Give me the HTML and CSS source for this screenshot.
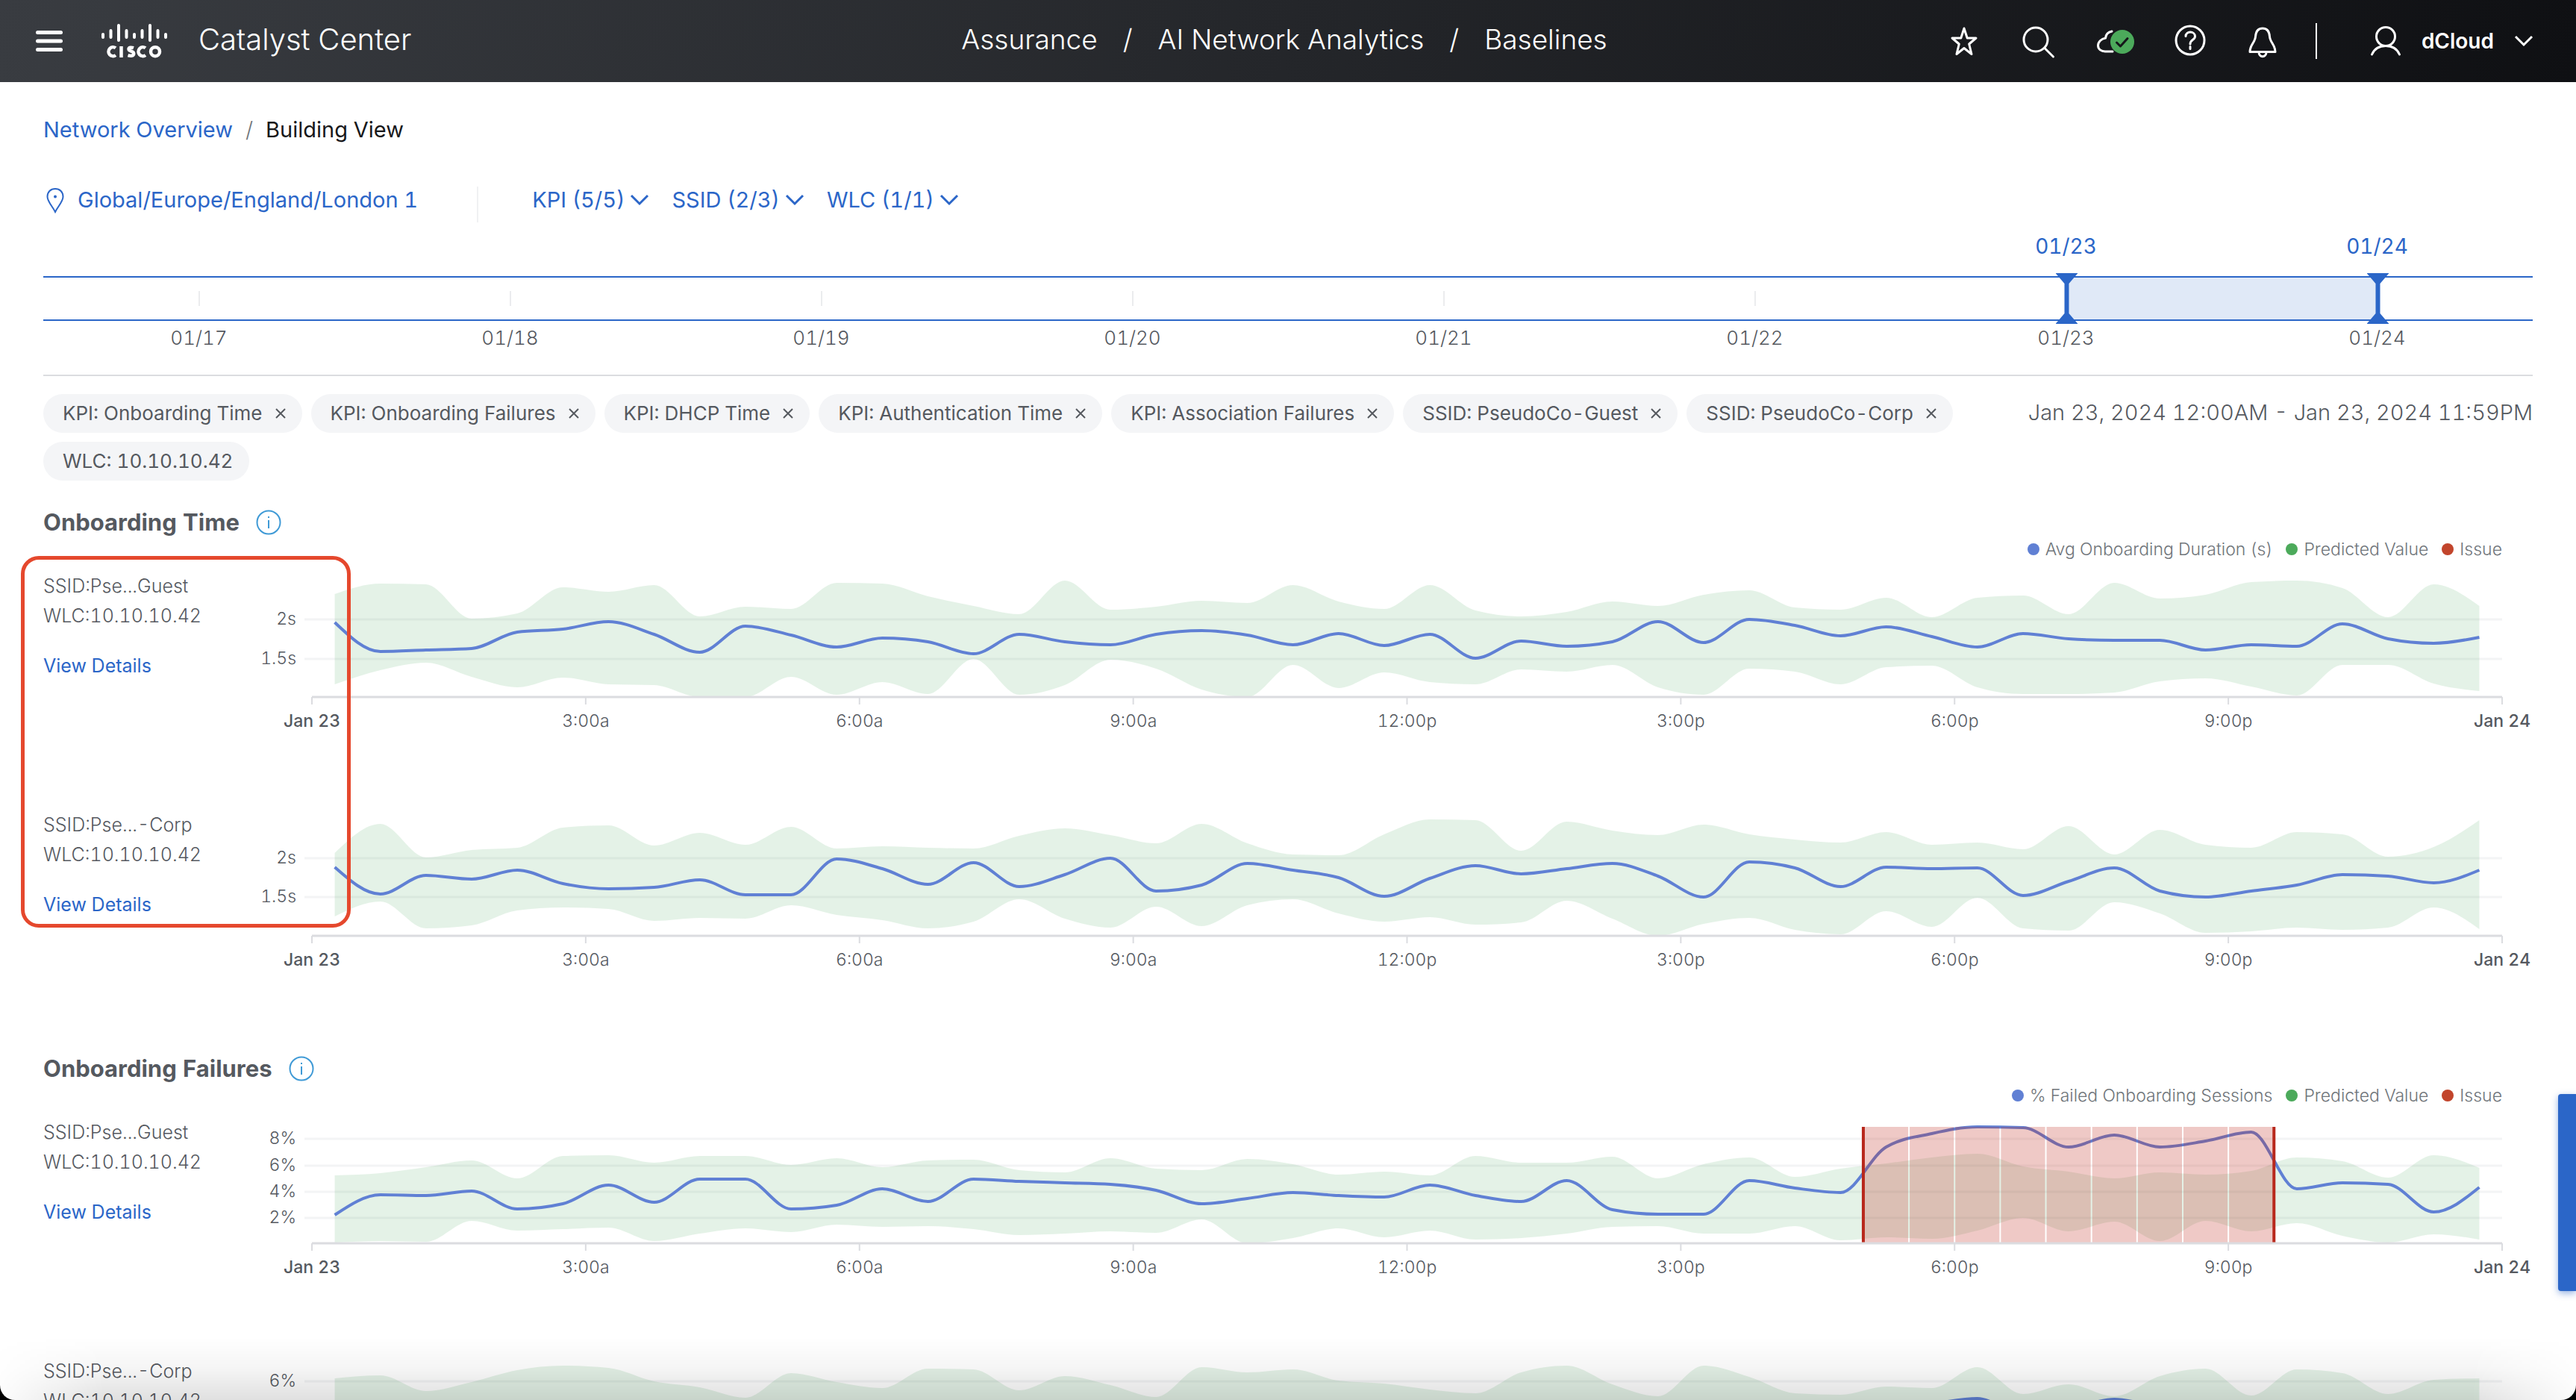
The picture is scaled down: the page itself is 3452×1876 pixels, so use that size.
FILE: index.html
```
<!DOCTYPE html>
<html lang="en">
<head>
<meta charset="utf-8">
<title>Catalyst Center - Baselines</title>
<link rel="stylesheet" href="styles.css">
</head>
<body>
<header class="topbar">
  <div class="brand">
    <button class="icon-btn" aria-label="Menu"><svg width="36" height="30" viewBox="0 0 36 30" stroke="#fff" stroke-width="5" stroke-linecap="round"><path d="M2.500 3.500h31M2.500 15h31M2.500 26.500h31"/></svg></button>
    <svg class="logo" width="88" height="46" viewBox="0 0 88 46" role="img" aria-label="Cisco" fill="none" stroke="#fff" stroke-width="4" stroke-linecap="round">
      <path d="M2 14v4M12.500 9v9M23 2v20M33.500 9v9M44 14v4M54.500 9v9M65 2v20M75.500 9v9M86 14v4"/>
      <path stroke-width="4.500" stroke-linecap="butt" d="M19 32.300a6 6 0 1 0 0 9.700M26.500 30v15M43 32.200c-3-1-6.500-.7-6.500 1.600 0 3.700 6.700 2 6.700 5.900 0 3.400-4 3.600-7.700 2.400M59 32.300a6 6 0 1 0 0 9.700"/><circle cx="72" cy="37.200" r="6" stroke-width="4.500"/>
    </svg>
    <span class="product">Catalyst Center</span>
  </div>
  <nav class="trail" aria-label="Section"><a href="#">Assurance</a><span>/</span><a href="#">AI Network Analytics</a><span>/</span><a href="#">Baselines</a></nav>
  <div class="tools">
    <div class="tool-set">
      <button class="icon-btn" aria-label="Favorites"><svg class="ico" viewBox="0 0 44 44"><path d="M22 5l4.200 13H38l-9.300 8L32 39.500l-10-8-10 8L15.300 26 6 18h11.800z"/></svg></button>
      <button class="icon-btn" aria-label="Search"><svg class="ico" viewBox="0 0 44 44"><circle cx="18" cy="20" r="16"/><path d="M30 31.500L41.500 43"/></svg></button>
      <button class="icon-btn" aria-label="Cloud status"><svg class="ico" viewBox="0 0 44 44"><path d="M20 9c-5 1-8 4-8.500 9C6 19 1.500 23 1.500 28S6 36 11 36h10"/><circle class="ok" cx="34" cy="23" r="16"/><path stroke="#15171a" d="M26.500 24l5 5L41 18.500"/></svg></button>
      <button class="icon-btn" aria-label="Help"><svg class="ico" viewBox="0 0 44 44"><circle cx="25" cy="21" r="19"/><path d="M19 15.500c0-7.500 12.500-7 12.500.200 0 5-6.500 4.300-6.500 10.300M25 29.500v3"/></svg></button>
      <button class="icon-btn" aria-label="Notifications"><svg class="ico" viewBox="0 0 44 44"><path d="M22 5c-6 0-9 4-9.500 11C12 24 5 27 5 36.500h34C39 27 32 24 31.500 16 31 9 28 5 22 5zM17 37c0 7.500 10 7.500 10 0"/></svg></button>
    </div>
    <button class="account"><svg class="person" width="40" height="40" viewBox="0 0 40 40"><circle cx="20" cy="14" r="12.500"/><path d="M1.500 38C5 30 12 26.500 20 26.500S35 30 38.500 38"/></svg><span>dCloud</span><svg class="chev" width="24" height="14" viewBox="0 0 24 14"><path d="M1 1l11 11L23 1"/></svg></button>
  </div>
</header>

<main class="page">
  <nav class="crumbs" aria-label="Breadcrumb"><a href="#">Network Overview</a><span class="sep">/</span><span>Building View</span></nav>

  <div class="filters">
    <a class="location" href="#"><svg width="24" height="36" viewBox="0 0 24 36"><path d="M12 3C5.500 3 1.500 7.500 1.500 13.500 1.500 20 8 26 12 34c4-8 10.500-14 10.500-20.500C22.500 7.500 18.500 3 12 3z"/><circle class="dot" cx="12" cy="13.500" r="2"/></svg>Global/Europe/England/London 1</a>
    <div class="pickers">
      <button class="picker">KPI (5/5)<svg class="chev" width="24" height="14" viewBox="0 0 24 14"><path d="M1 1l11 11L23 1"/></svg></button>
      <button class="picker">SSID (2/3)<svg class="chev" width="24" height="14" viewBox="0 0 24 14"><path d="M1 1l11 11L23 1"/></svg></button>
      <button class="picker">WLC (1/1)<svg class="chev" width="24" height="14" viewBox="0 0 24 14"><path d="M1 1l11 11L23 1"/></svg></button>
    </div>
  </div>

  <section class="timeline" aria-label="Date range">
    <div class="days picked"><span class="from">01/23</span><span>01/24</span></div>
    <div class="band">
      <div class="days ticks"><i></i><i></i><i></i><i></i><i></i><i></i><i></i><i></i></div>
      <div class="range"><span class="handle start"></span><span class="handle end"></span></div>
    </div>
    <div class="days dates"><span>01/17</span><span>01/18</span><span>01/19</span><span>01/20</span><span>01/21</span><span>01/22</span><span>01/23</span><span>01/24</span></div>
  </section>

  <div class="applied">
    <ul class="chips">
      <li>KPI: Onboarding Time<button aria-label="Remove"><svg class="x" viewBox="0 0 14 14"><path d="M1 1l12 12M13 1L1 13"/></svg></button></li>
      <li>KPI: Onboarding Failures<button aria-label="Remove"><svg class="x" viewBox="0 0 14 14"><path d="M1 1l12 12M13 1L1 13"/></svg></button></li>
      <li>KPI: DHCP Time<button aria-label="Remove"><svg class="x" viewBox="0 0 14 14"><path d="M1 1l12 12M13 1L1 13"/></svg></button></li>
      <li>KPI: Authentication Time<button aria-label="Remove"><svg class="x" viewBox="0 0 14 14"><path d="M1 1l12 12M13 1L1 13"/></svg></button></li>
      <li>KPI: Association Failures<button aria-label="Remove"><svg class="x" viewBox="0 0 14 14"><path d="M1 1l12 12M13 1L1 13"/></svg></button></li>
      <li>SSID: PseudoCo-Guest<button aria-label="Remove"><svg class="x" viewBox="0 0 14 14"><path d="M1 1l12 12M13 1L1 13"/></svg></button></li>
      <li>SSID: PseudoCo-Corp<button aria-label="Remove"><svg class="x" viewBox="0 0 14 14"><path d="M1 1l12 12M13 1L1 13"/></svg></button></li>
      <li>WLC: 10.10.10.42</li>
    </ul>
    <p class="period">Jan 23, 2024 12:00AM - Jan 23, 2024 11:59PM</p>
  </div>

  <section class="kpi">
    <h2>Onboarding Time<svg class="info" viewBox="0 0 34 34"><circle cx="17" cy="17" r="15.500"/><path d="M17 9v2M17 14v11"/></svg></h2>
    <ul class="legend"><li class="blue">Avg Onboarding Duration (s)</li><li class="green">Predicted Value</li><li class="red">Issue</li></ul>
    <div class="rows">
      <article class="row"><div class="who"><p>SSID:Pse...Guest</p><p>WLC:10.10.10.42</p><a href="#">View Details</a></div><div class="chart" data-chart="timeGuest"></div></article>
      <article class="row"><div class="who"><p>SSID:Pse...-Corp</p><p>WLC:10.10.10.42</p><a href="#">View Details</a></div><div class="chart" data-chart="timeCorp"></div></article>
      <div class="callout"></div>
    </div>
  </section>

  <section class="kpi">
    <h2>Onboarding Failures<svg class="info" viewBox="0 0 34 34"><circle cx="17" cy="17" r="15.500"/><path d="M17 9v2M17 14v11"/></svg></h2>
    <ul class="legend"><li class="blue">% Failed Onboarding Sessions</li><li class="green">Predicted Value</li><li class="red">Issue</li></ul>
    <div class="rows">
      <article class="row"><div class="who"><p>SSID:Pse...Guest</p><p>WLC:10.10.10.42</p><a href="#">View Details</a></div><div class="chart" data-chart="failGuest"></div></article>
      <article class="row"><div class="who"><p>SSID:Pse...-Corp</p><p>WLC:10.10.10.42</p><a href="#">View Details</a></div><div class="chart" data-chart="failCorp"></div></article>
    </div>
  </section>
</main>

<button class="side-tab" aria-label="Open panel"></button>
<div class="window-shade"></div>
<div class="window-frame"></div>
<script src="charts.js"></script>
</body>
</html>
```
FILE: styles.css
```
* { box-sizing: border-box; }
html, body { margin: 0; height: 100%; }
body { display: flex; flex-direction: column; overflow: hidden; background: #fff; color: #55595f; font-family: Inter, "Liberation Sans", sans-serif; font-size: 24px; font-variant-numeric: tabular-nums; }
h2, p, ul { margin: 0; padding: 0; }
ul { list-style: none; }
a { color: #2b66c8; text-decoration: none; }
button { border: 0; padding: 0; background: none; color: inherit; font: inherit; cursor: pointer; }
svg { display: block; overflow: visible; flex: none; }

.topbar { flex: none; display: grid; grid-template-columns: 1fr auto 1fr; align-items: center; height: 110px; padding: 0 58px 0 48px; background: linear-gradient(100deg, #393c41, #0f1013); color: #fff; }
.brand, .tools, .tool-set, .account, .trail { display: flex; align-items: center; }
.logo { margin-left: 52px; }
.product { margin-left: 42px; font-size: 40px; font-weight: 300; line-height: 48px; padding-bottom: 4px; }
.trail { gap: 34px; font-size: 37px; font-weight: 300; line-height: 48px; padding-bottom: 4px; }
.trail a { color: #fff; }
.tools { justify-content: flex-end; }
.tool-set { gap: 56px; padding-right: 49px; border-right: 2px solid #fff; height: 48px; }
.ico { width: 44px; height: 44px; fill: none; stroke: #fff; stroke-width: 3px; stroke-linecap: round; stroke-linejoin: round; }
.ok { fill: #4caa5b; stroke: none; }
.account { margin-left: 72px; font-size: 28px; font-weight: 600; }
.account span { margin: 0 28px; }
.person { fill: none; stroke: #fff; stroke-width: 3px; stroke-linecap: round; }
.chev { fill: none; stroke: currentColor; stroke-width: 3px; }

.page { flex: 1; min-height: 0; overflow-y: auto; scrollbar-width: none; padding: 44px 58px 0; }
.crumbs { display: flex; gap: 17px; color: #17181a; font-size: 29px; line-height: 40px; }
.crumbs .sep { color: #6f757a; font-weight: 300; }
.filters { display: flex; margin-top: 56px; height: 48px; font-size: 29px; line-height: 36px; }
.location { display: flex; gap: 18px; padding-left: 4px; padding-right: 79px; border-right: 2px solid #f0f1f3; }
.location svg { fill: none; stroke: #2b66c8; stroke-width: 2px; }
.location .dot { fill: #2b66c8; stroke: none; }
.pickers { display: flex; align-items: flex-start; gap: 31px; padding-left: 72px; color: #2b66c8; }
.picker { display: flex; align-items: center; gap: 8px; line-height: 36px; }

.timeline { margin-top: 12px; padding-bottom: 26px; border-bottom: 2px solid #dbdce0; }
.days { display: grid; grid-template-columns: repeat(8, 1fr); text-align: center; }
.picked { color: #2b66c8; font-size: 28px; line-height: 40px; padding-bottom: 20px; }
.from { grid-column: 7; }
.band { position: relative; height: 60px; border: solid #2b66c8; border-width: 2px 0; }
.ticks { height: 100%; align-items: center; justify-items: center; }
.ticks i { width: 2px; height: 20px; background: #ebecee; }
.range { position: absolute; top: 0; bottom: 0; left: 81.25%; width: 12.5%; background: #e0e9f7; }
.handle { position: absolute; top: -6px; bottom: -6px; width: 30px; background: #2b66c8; clip-path: polygon(0 0, 100% 0, 60% 14px, 60% calc(100% - 14px), 100% 100%, 0 100%, 40% calc(100% - 14px), 40% 14px); }
.start { left: -14px; }
.end { right: -16px; }
.dates { font-size: 26px; font-weight: 300; line-height: 46px; }

.applied { display: flex; align-items: flex-start; gap: 40px; margin-top: 24px; }
.chips { flex: 1; display: flex; flex-wrap: wrap; gap: 12px; }
.chips li { display: flex; align-items: center; gap: 17px; height: 52px; padding: 0 22px 0 26px; border-radius: 26px; background: #f4f5f7; font-size: 26px; line-height: 48px; }
.chips li:last-child { padding-right: 22px; }
.x { width: 14px; height: 14px; fill: none; stroke: #55595f; stroke-width: 2px; }
.period { font-size: 29px; font-weight: 300; line-height: 50px; white-space: nowrap; }

.kpi { margin-top: 20px; }
.applied + .kpi { margin-top: 36px; }
h2 { display: flex; align-items: center; gap: 22px; font-size: 31px; font-weight: 700; line-height: 40px; }
.info { width: 34px; height: 34px; fill: none; stroke: #3f9ad6; stroke-width: 2px; }
.legend { display: flex; justify-content: flex-end; gap: 18px; padding-right: 41px; color: #6f757a; font-size: 23px; font-weight: 300; line-height: 32px; }
.legend li { display: flex; align-items: center; gap: 8px; }
.legend li::before { content: ""; width: 16px; height: 16px; border-radius: 50%; background: currentColor; }
.legend .blue::before { background: #6080d4; }
.legend .green::before { background: #4caa5b; }
.legend .red::before { background: #c2452c; }
.rows { position: relative; }
.row { display: grid; grid-template-columns: 282px 1fr; height: 320px; }
.who { padding-top: 13px; font-size: 25px; font-weight: 300; line-height: 40px; }
.who a { display: block; margin-top: 27px; font-weight: 400; }
.callout { position: absolute; left: -30px; top: -7px; width: 442px; height: 498px; border: 5px solid #e5482d; border-radius: 24px; pointer-events: none; }

.chart svg { width: 100%; height: 260px; }
.grid { stroke: #f3f4f5; stroke-width: 3px; }
.axis { stroke: #dbdce0; stroke-width: 3px; }
.tick { stroke: #dbdce0; stroke-width: 2px; }
.predicted { fill: #4caa5b; fill-opacity: .15; }
.actual { fill: none; stroke: #6080d4; stroke-width: 4px; }
.issue { fill: #c1271d; fill-opacity: .25; }
.edge { stroke: #b8281c; stroke-width: 4px; }
.label { fill: #55595f; font-size: 23px; font-weight: 300; }
.label.day { font-weight: 500; }

.side-tab { position: fixed; right: 0; top: 1466px; width: 24px; height: 264px; border-radius: 4px 0 0 4px; background: #2b66c8; box-shadow: 0 3px 10px rgba(43, 102, 200, .5); }
.window-shade { position: fixed; inset: auto 0 0; height: 84px; background: linear-gradient(rgba(0, 0, 0, 0), rgba(0, 0, 0, .04) 50%, rgba(0, 0, 0, .12)); mask-image: linear-gradient(to right, rgba(0, 0, 0, .1), #000 140px, #000 calc(100% - 140px), rgba(0, 0, 0, .1)); pointer-events: none; }
.window-frame { position: fixed; inset: 0; border-radius: 0 0 20px 20px; box-shadow: 0 0 0 20px #000; pointer-events: none; }
```
FILE: charts.js
```
// Half-hour samples for one day; every value is a height above the time axis.
const charts = {
  timeGuest: {
    marks: [[104, '2s'], [51, '1.5s']],
    high: [138,152,151,105,112,147,141,150,108,121,118,153,152,135,122,111,156,117,121,129,126,150,128,118,150,116,108,114,128,122,137,143,120,117,133,107,133,136,111,153,132,137,154,156,146,107,151,122],
    low: [17,36,46,27,13,26,17,16,0,0,27,3,20,4,51,3,16,50,38,10,0,43,12,33,20,17,37,34,43,13,3,38,34,17,40,42,13,4,4,6,21,25,14,2,43,43,18,8],
    line: [100,61,63,65,87,91,101,84,60,95,83,67,79,74,58,84,74,70,84,89,83,70,85,69,84,52,75,68,74,101,73,104,96,82,94,81,67,85,78,76,76,63,70,68,98,78,72,80]
  },
  timeCorp: {
    marks: [[104, '2s'], [52, '1.5s']],
    high: [111,150,105,115,118,145,148,121,138,122,146,117,120,118,117,134,144,135,124,150,124,109,108,136,156,155,114,153,141,135,149,136,129,125,139,122,125,116,147,109,142,122,118,139,136,106,119,155],
    low: [26,46,10,14,34,38,36,20,24,23,41,28,21,10,19,49,23,11,39,13,41,49,30,19,25,15,18,47,23,0,16,24,8,2,33,12,51,10,7,45,30,4,6,11,8,11,38,9],
    line: [92,56,81,76,88,70,63,65,75,55,55,103,90,69,98,66,82,104,60,68,97,88,78,53,77,94,83,90,97,80,52,99,91,66,92,90,91,54,73,91,60,52,60,68,82,80,71,88]
  },
  failGuest: {
    marks: [[140, '8%'], [104, '6%'], [69, '4%'], [34, '2%']],
    high: [91,94,102,111,87,117,118,108,117,117,105,114,102,111,112,98,95,114,100,98,113,106,92,96,91,117,108,108,116,87,106,115,89,100,107,115,120,103,96,87,95,92,97,115,110,88,118,101],
    low: [1,3,2,30,17,19,21,3,13,20,15,25,22,23,19,11,13,16,14,32,0,7,20,8,17,5,7,13,22,23,13,13,23,4,8,6,17,34,16,29,3,30,16,27,10,1,12,5],
    line: [38,65,64,70,46,53,78,55,86,86,46,51,73,56,86,83,81,79,71,53,60,68,64,62,78,64,56,84,45,39,39,84,74,68,129,147,156,155,129,145,129,137,149,73,81,79,42,75],
    issue: [33.5, 42.5]
  },
  failCorp: {
    marks: [[135, '6%'], [90, '4%'], [45, '2%']],
    high: [139,143,122,134,150,156,153,135,127,113,146,134,126,152,151,123,142,130,114,154,147,151,136,132,124,119,147,156,131,115,156,141,119,117,128,126,154,118,131,115,142,152,116,151,146,118,137,139],
    low: Array(48).fill(10),
    line: [60,64,58,70,66,52,60,71,64,58,62,70,66,55,60,68,72,64,58,60,66,70,62,58,64,70,66,60,55,62,68,70,64,90,98,105,112,90,98,111,100,90,60,64,70,62,58,60]
  }
};
const hours = ['Jan 23', '3:00a', '6:00a', '9:00a', '12:00p', '3:00p', '6:00p', '9:00p', 'Jan 24'];
const BASE = 182;

// Monotone cubic interpolation: the curve never overshoots a sample.
function curve(points) {
  const n = points.length;
  const d = [];
  for (let i = 0; i < n - 1; i++) d.push((points[i + 1][1] - points[i][1]) / (points[i + 1][0] - points[i][0]));
  const m = [];
  for (let i = 1; i < n - 1; i++) {
    m[i] = d[i - 1] * d[i] <= 0 ? 0 : Math.sign(d[i]) * Math.min(Math.abs(d[i - 1]), Math.abs(d[i]), Math.abs(d[i - 1] + d[i]) / 4) * 2;
  }
  m[0] = (3 * d[0] - m[1]) / 2;
  m[n - 1] = (3 * d[n - 2] - m[n - 2]) / 2;
  let path = points[0].join(' ');
  for (let i = 0; i < n - 1; i++) {
    const [x0, y0] = points[i];
    const [x1, y1] = points[i + 1];
    const h = (x1 - x0) / 3;
    path += `C${x0 + h} ${y0 + m[i] * h} ${x1 - h} ${y1 - m[i + 1] * h} ${x1} ${y1}`;
  }
  return path;
}

function draw(box) {
  const data = charts[box.dataset.chart];
  const width = box.clientWidth;
  const left = 78;
  const right = width - 41;
  const step = (right - left) / 48;
  const at = i => left + step * (i + 0.5);
  const line = values => values.map((v, i) => [at(i), BASE - v]);
  let out = '';
  for (const [v, text] of data.marks) {
    out += `<path class="grid" d="M68 ${BASE - v}H${right}"/><text class="label" x="57" y="${BASE - v + 7}" text-anchor="end">${text}</text>`;
  }
  out += `<path class="predicted" d="M${curve(line(data.high))}L${curve(line(data.low).reverse())}Z"/>`;
  out += `<path class="actual" d="M${curve(line(data.line))}"/>`;
  if (data.issue) {
    const [from, to] = data.issue;
    for (let i = from; i < to; i++) {
      out += `<rect class="issue" x="${at(i) + 1}" y="${BASE - 156}" width="${step - 2}" height="156"/>`;
    }
    out += `<path class="edge" d="M${at(from)} ${BASE - 156}V${BASE}M${at(to)} ${BASE - 156}V${BASE}"/>`;
  }
  out += `<path class="axis" d="M${left} ${BASE}H${right}"/>`;
  hours.forEach((text, i) => {
    const x = left + step * 6 * i;
    const day = i % 8 === 0 ? ' day' : '';
    out += `<path class="tick" d="M${x} ${BASE}v10"/><text class="label${day}" x="${x}" y="${BASE + 40}" text-anchor="middle">${text}</text>`;
  });
  box.innerHTML = `<svg role="img" aria-label="Baseline chart">${out}</svg>`;
}

function drawAll() {
  document.querySelectorAll('.chart').forEach(draw);
}
drawAll();
window.addEventListener('resize', drawAll);
```
